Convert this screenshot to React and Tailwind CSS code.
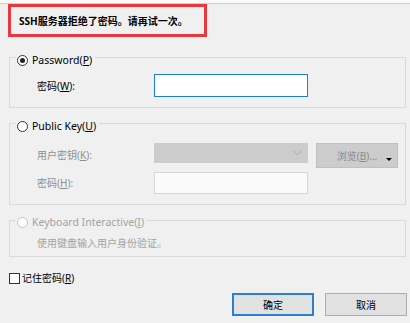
import React from 'react'

function Radio({ checked, disabled }) {
  return (
    <span
      className={
        'w-[11px] h-[11px] rounded-full border flex items-center justify-center bg-white shrink-0 ' +
        (disabled ? 'border-[#c2c2c2] bg-[#f4f4f4]' : 'border-[#333333]')
      }
    >
      {checked && <span className="w-[5px] h-[5px] rounded-full bg-[#222222]" />}
    </span>
  )
}

function GroupHeader({ checked, disabled, children, offset }) {
  return (
    <div
      className={
        'ml-[6px] w-fit h-[16px] px-[1px] pr-[3px] bg-[#f0f0f0] flex items-center gap-[4px] ' +
        offset +
        (disabled ? ' text-[#a3a3a3]' : ' text-black')
      }
    >
      <Radio checked={checked} disabled={disabled} />
      <span className="text-[10.5px] leading-[16px]">{children}</span>
    </div>
  )
}

export default function App() {
  return (
    <div className="w-[410px] h-[323px] overflow-hidden bg-[#f0f0f0] text-[10px] leading-[16px] text-black font-['Segoe_UI','Noto_Sans','Noto_Sans_CJK_SC',sans-serif]">
      <div className="h-[4px] bg-[#fafafa] border-b border-[#cdcdcd]" />

      <div className="ml-[8px] w-[199px] h-[33px] border-[3px] border-[#e9393e] flex items-center pl-[8px] font-bold">
        SSH服务器拒绝了密码。请再试一次。
      </div>

      {/* Password */}
      <div className="mt-[20px] ml-[9px] w-[397px] border border-[#dadada] pb-[10px]">
        <GroupHeader checked offset="-mt-[6px]">
          Password(<u>P</u>)
        </GroupHeader>
        <div className="mt-[6px] flex items-center">
          <span className="ml-[27px] w-[117px]">
            密码(<u>W</u>):
          </span>
          <div className="w-[154px] h-[23px] border border-[#1a7fd4] bg-white" />
        </div>
      </div>

      {/* Public Key */}
      <div className="mt-[15px] ml-[9px] w-[397px] border border-[#dadada] pb-[10px]">
        <GroupHeader offset="-mt-[6px]">
          Public Key(<u>U</u>)
        </GroupHeader>
        <div className="mt-[9px] flex items-start text-[#8e8e8e]">
          <span className="ml-[27px] w-[117px] mt-[4px]">
            用户密钥(<u>K</u>):
          </span>
          <div className="w-[154px] h-[20px] bg-[#cccccc] flex items-center justify-end pr-[6px]">
            <svg width="9" height="6" viewBox="0 0 9 6">
              <path d="M0.5 0.8 L4.5 4.8 L8.5 0.8" fill="none" stroke="#ababab" strokeWidth="1" />
            </svg>
          </div>
          <div className="relative ml-[8px] w-[82px] h-[25px] bg-[#cccccc] border border-[#c0c0c0] flex items-center justify-center text-[#8a8a8a]">
            浏览(<u>B</u>)...
            <span className="absolute right-[5px] top-[14px] w-0 h-0 border-l-[3px] border-r-[3px] border-t-[3px] border-l-transparent border-r-transparent border-t-black" />
          </div>
        </div>
        <div className="mt-[4px] flex items-center text-[#8e8e8e]">
          <span className="ml-[27px] w-[117px]">
            密码(<u>H</u>):
          </span>
          <div className="w-[154px] h-[22px] border border-[#d6d6d6] bg-[#fafafa]" />
        </div>
      </div>

      {/* Keyboard Interactive */}
      <div className="mt-[15px] ml-[9px] w-[397px] border border-[#dadada] pb-[5px]">
        <GroupHeader disabled offset="-mt-[7px]">
          Keyboard Interactive(<u>I</u>)
        </GroupHeader>
        <div className="mt-[5px] ml-[27px] text-[#a3a3a3]">使用键盘输入用户身份验证。</div>
      </div>

      <div className="mt-[13px] ml-[9px] h-[16px] flex items-center gap-[2px]">
        <span className="w-[11px] h-[11px] border border-[#333333] bg-white" />
        <span>
          记住密码(<u>R</u>)
        </span>
      </div>

      <div className="mt-[7px] pr-[3px] flex justify-end gap-[11px]">
        <button className="w-[82px] h-[23px] bg-[#e1e1e1] border-2 border-[#2a7fd3] flex items-center justify-center">
          确定
        </button>
        <button className="w-[82px] h-[23px] bg-[#e1e1e1] border border-[#adadad] flex items-center justify-center">
          取消
        </button>
      </div>
    </div>
  )
}
